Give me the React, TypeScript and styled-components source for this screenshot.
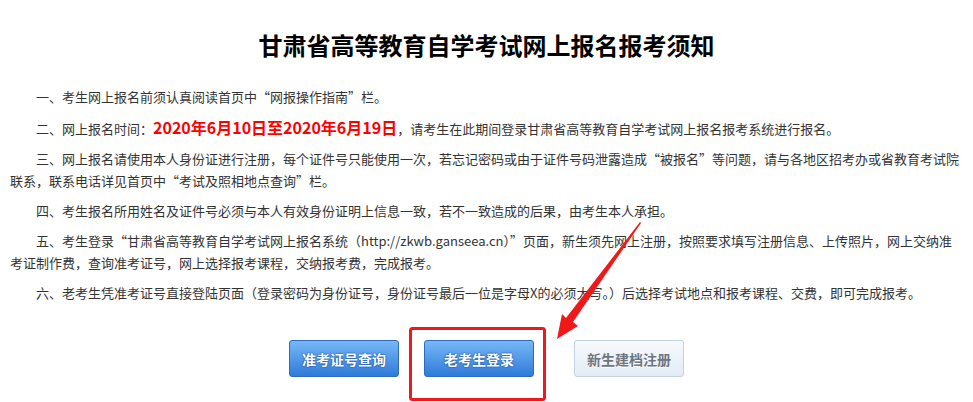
import React from 'react';
import styled, { createGlobalStyle, css } from 'styled-components';

const GlobalStyle = createGlobalStyle`
  html, body {
    margin: 0;
    padding: 0;
    background: #fff;
  }
  body {
    font-family: "Noto Sans CJK SC", "Noto Sans", sans-serif;
  }
`;

const Page = styled.div`
  position: relative;
  width: 973px;
  height: 402px;
  padding: 27px 10px 0;
  box-sizing: border-box;
  overflow: hidden;
`;

const Title = styled.h1`
  margin: 0 0 23px;
  font-size: 24px;
  line-height: 36px;
  font-weight: bold;
  color: #000;
  text-align: center;
`;

const Notice = styled.div`
  font-size: 13px;
  line-height: 22px;
  color: #333;
`;

const Para = styled.p`
  margin: 0 0 8px;
  text-indent: 26px;
`;

const Highlight = styled.strong`
  font-size: 16px;
  font-weight: bold;
  color: #ff0000;
`;

const ButtonRow = styled.div`
  display: flex;
  justify-content: center;
  gap: 25px;
  margin-top: 36px;
`;

const ActionButton = styled.button<{ $variant?: 'primary' | 'muted' }>`
  width: 110px;
  height: 37px;
  padding: 0;
  border-radius: 3px;
  font-family: inherit;
  font-size: 14px;
  font-weight: bold;
  cursor: pointer;
  ${(p) =>
    p.$variant === 'muted'
      ? css`
          margin-left: 15px;
          color: #6b7683;
          border: 1px solid #c3d3e3;
          background: linear-gradient(#f7fafd, #e2ebf5);
          text-shadow: 0 1px 0 #fff;
        `
      : css`
          color: #fff;
          border: 1px solid #2c6bbf;
          background: linear-gradient(#78b7f7, #2f7bd9);
          text-shadow: 0 0 2px #1b4f95, 0 0 1px #1b4f95;
        `}
`;

const Annotation = styled.svg`
  position: absolute;
  top: 0;
  left: 0;
  pointer-events: none;
`;

export default function App() {
  return (
    <>
      <GlobalStyle />
      <Page>
        <Title>甘肃省高等教育自学考试网上报名报考须知</Title>
        <Notice>
          <Para>一、考生网上报名前须认真阅读首页中“网报操作指南”栏。</Para>
          <Para>
            二、网上报名时间：<Highlight>2020年6月10日至2020年6月19日</Highlight>，请考生在此期间登录甘肃省高等教育自学考试网上报名报考系统进行报名。
          </Para>
          <Para>
            三、网上报名请使用本人身份证进行注册，每个证件号只能使用一次，若忘记密码或由于证件号码泄露造成“被报名”等问题，请与各地区招考办或省教育考试院联系，联系电话详见首页中“考试及照相地点查询”栏。
          </Para>
          <Para>四、考生报名所用姓名及证件号必须与本人有效身份证明上信息一致，若不一致造成的后果，由考生本人承担。</Para>
          <Para>
            五、考生登录“甘肃省高等教育自学考试网上报名系统（http://zkwb.ganseea.cn）”页面，新生须先网上注册，按照要求填写注册信息、上传照片，网上交纳准考证制作费，查询准考证号，网上选择报考课程，交纳报考费，完成报考。
          </Para>
          <Para>
            六、老考生凭准考证号直接登陆页面（登录密码为身份证号，身份证号最后一位是字母X的必须大写。）后选择考试地点和报考课程、交费，即可完成报考。
          </Para>
        </Notice>
        <ButtonRow>
          <ActionButton>准考证号查询</ActionButton>
          <ActionButton>老考生登录</ActionButton>
          <ActionButton $variant="muted">新生建档注册</ActionButton>
        </ButtonRow>
        <Annotation width="973" height="402" viewBox="0 0 973 402">
          <rect x="410.5" y="328.5" width="134" height="71" rx="2" fill="none" stroke="#f01818" strokeWidth="3" />
          <polygon
            points="640,222 641,223 573,322 578,326 557,339 562,314 566,318"
            fill="#f01818"
          />
        </Annotation>
      </Page>
    </>
  );
}
